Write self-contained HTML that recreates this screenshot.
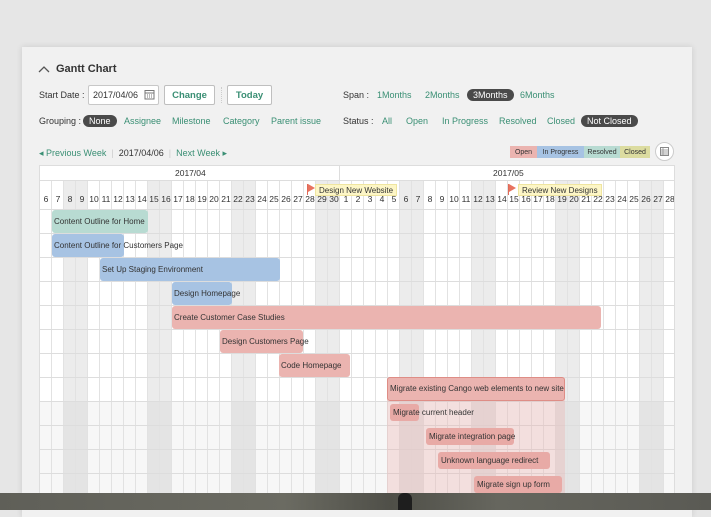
<!DOCTYPE html>
<html><head><meta charset="utf-8">
<style>
*{box-sizing:border-box;margin:0;padding:0}
body{width:711px;height:510px;overflow:hidden;background:#e6e6e6;font-family:"Liberation Sans",sans-serif;color:#333;position:relative}
.panel{position:absolute;left:22px;top:47px;width:670px;height:470px;background:#f1f1f1;box-shadow:0 0 6px rgba(0,0,0,.12)}
.a{position:absolute;white-space:nowrap}
.g{color:#3a8f74}
.t{font-size:9px}
.pill{background:#4a4a4a;color:#fff;border-radius:8px;padding:1px 6px}
.btn{border:1px solid #bfbfbf;background:#fff;color:#3a8f74;font-weight:bold;font-size:9.5px;height:20px;border-radius:2px;display:flex;align-items:center;justify-content:center}
.chart{position:absolute;left:39px;top:165px;width:636px;height:340px;background:#fff;border:1px solid #ddd;overflow:hidden}
.vl{position:absolute;top:15px;bottom:0;left:0;right:0;background:repeating-linear-gradient(90deg,transparent 0 11px,#e2e2e2 11px 12px)}
.we{position:absolute;top:15px;bottom:0;width:24px;background:#ececec}
.hl{position:absolute;left:0;right:0;height:1px;background:#ddd}
.days{position:absolute;left:0;top:28px;display:flex;font-size:8.5px;color:#333}
.days span{width:12px;text-align:center}
.bar{position:absolute;height:23px;border-radius:3px;font-size:8px;line-height:23px;padding-left:2px;white-space:nowrap;color:#333}
.o{background:#ebb4b0}.p{background:#a7c3e3}.r{background:#b8dbd2}
.c{position:absolute;height:17px;border-radius:3px;font-size:8px;line-height:17px;padding-left:3px;white-space:nowrap;background:#e8aaa6;color:#333}
.ms{position:absolute;top:18px;height:12px;font-size:8px;line-height:12px;background:#fdf6c6;border:1px solid #efe5a0;padding:0 3px;color:#333}
.flag{position:absolute;top:18px;width:8px;height:11px;border-left:1.5px solid #e06a58}
.flag:after{content:"";position:absolute;left:0;top:0;border-left:7px solid #e8735f;border-top:4px solid transparent;border-bottom:4px solid transparent}
.lg span{display:flex;align-items:center;justify-content:center;height:12px}
</style></head><body>
<div class="panel"></div>
<svg class="a" style="left:38px;top:65px" width="12" height="8"><path d="M1 7 L6 2 L11 7" fill="none" stroke="#555" stroke-width="1.3"/></svg>
<div class="a" style="left:56px;top:63px;font-size:11px;font-weight:bold;color:#333">Gantt Chart</div>
<div class="a t" style="left:39px;top:90px">Start Date :</div>
<div class="a" style="left:88px;top:85px;width:71px;height:20px;background:#fff;border:1px solid #c8c8c8;border-radius:2px;font-size:9px;line-height:18px;padding-left:4px">2017/04/06</div>
<svg class="a" style="left:144px;top:89px" width="11" height="11"><rect x="1" y="1.5" width="9" height="8.5" fill="none" stroke="#777"/><path d="M1 4h9M3 6h1M5 6h1M7 6h1M3 8h1M5 8h1M7 8h1" stroke="#777"/></svg>
<div class="a btn" style="left:164px;top:85px;width:51px">Change</div>
<div class="a" style="left:221px;top:87px;height:16px;border-left:1px dotted #ccc"></div>
<div class="a btn" style="left:227px;top:85px;width:45px">Today</div>
<div class="a t" style="left:39px;top:116px">Grouping :</div>
<div class="a t pill" style="left:83px;top:115px">None</div>
<div class="a t g" style="left:124px;top:116px">Assignee</div>
<div class="a t g" style="left:172px;top:116px">Milestone</div>
<div class="a t g" style="left:223px;top:116px">Category</div>
<div class="a t g" style="left:271px;top:116px">Parent issue</div>
<div class="a t" style="left:343px;top:90px">Span :</div>
<div class="a t g" style="left:377px;top:90px">1Months</div>
<div class="a t g" style="left:425px;top:90px">2Months</div>
<div class="a t pill" style="left:467px;top:89px">3Months</div>
<div class="a t g" style="left:520px;top:90px">6Months</div>
<div class="a t" style="left:343px;top:116px">Status :</div>
<div class="a t g" style="left:382px;top:116px">All</div>
<div class="a t g" style="left:406px;top:116px">Open</div>
<div class="a t g" style="left:442px;top:116px">In Progress</div>
<div class="a t g" style="left:499px;top:116px">Resolved</div>
<div class="a t g" style="left:547px;top:116px">Closed</div>
<div class="a t pill" style="left:581px;top:115px">Not Closed</div>
<div class="a t" style="left:39px;top:148px"><span class="g">◂ Previous Week</span> <span style="color:#ccc">&nbsp;|&nbsp;</span> 2017/04/06 <span style="color:#ccc">&nbsp;|&nbsp;</span> <span class="g">Next Week ▸</span></div>
<div class="a lg" style="left:510px;top:146px;height:12px;font-size:7px;display:flex">
<span style="background:#ebb4b0;width:27px">Open</span><span style="background:#a7c3e3;width:47px">In Progress</span><span style="background:#b8dbd2;width:36px">Resolved</span><span style="background:#dcdca0;width:30px">Closed</span></div>
<div class="a" style="left:655px;top:142px;width:19px;height:19px;border-radius:50%;background:#fff;border:1px solid #ccc"></div>
<svg class="a" style="left:660px;top:147px" width="9" height="9"><rect x=".5" y=".5" width="8" height="8" fill="none" stroke="#888"/><path d="M.5 3h8M.5 5h8M.5 7h8M3 .5v8" stroke="#888" stroke-width=".7"/></svg>

<div class="chart">
<div class="we" style="left:24px"></div><div class="we" style="left:108px"></div><div class="we" style="left:192px"></div><div class="we" style="left:276px"></div><div class="we" style="left:360px"></div><div class="we" style="left:432px"></div><div class="we" style="left:516px"></div><div class="we" style="left:600px"></div>
<div style="position:absolute;left:0;right:0;top:235px;bottom:0;background:rgba(0,0,0,.03)"></div>
<div class="vl"></div>
<div style="position:absolute;left:0;top:0;width:636px;height:15px;background:#fff;border-bottom:1px solid #ddd"></div>
<div style="position:absolute;left:299px;top:0;height:15px;border-left:1px solid #ddd"></div>
<div class="a" style="left:135px;top:2px;font-size:8.5px">2017/04</div>
<div class="a" style="left:453px;top:2px;font-size:8.5px">2017/05</div>
<div class="days"><span>6</span><span>7</span><span>8</span><span>9</span><span>10</span><span>11</span><span>12</span><span>13</span><span>14</span><span>15</span><span>16</span><span>17</span><span>18</span><span>19</span><span>20</span><span>21</span><span>22</span><span>23</span><span>24</span><span>25</span><span>26</span><span>27</span><span>28</span><span>29</span><span>30</span><span>1</span><span>2</span><span>3</span><span>4</span><span>5</span><span>6</span><span>7</span><span>8</span><span>9</span><span>10</span><span>11</span><span>12</span><span>13</span><span>14</span><span>15</span><span>16</span><span>17</span><span>18</span><span>19</span><span>20</span><span>21</span><span>22</span><span>23</span><span>24</span><span>25</span><span>26</span><span>27</span><span>28</span></div>
<div class="hl" style="top:43px"></div><div class="hl" style="top:67px"></div><div class="hl" style="top:91px"></div><div class="hl" style="top:115px"></div><div class="hl" style="top:139px"></div><div class="hl" style="top:163px"></div><div class="hl" style="top:187px"></div><div class="hl" style="top:211px"></div><div class="hl" style="top:235px"></div><div class="hl" style="top:259px"></div><div class="hl" style="top:283px"></div><div class="hl" style="top:307px"></div>
<div class="flag" style="left:267px"></div><div class="ms" style="left:275px">Design New Website</div>
<div class="flag" style="left:468px"></div><div class="ms" style="left:478px">Review New Designs</div>
<div class="bar r" style="left:12px;top:44px;width:96px">Content Outline for Home</div>
<div class="bar p" style="left:12px;top:68px;width:72px">Content Outline for Customers Page</div>
<div class="bar p" style="left:60px;top:92px;width:180px">Set Up Staging Environment</div>
<div class="bar p" style="left:132px;top:116px;width:60px">Design Homepage</div>
<div class="bar o" style="left:132px;top:140px;width:429px">Create Customer Case Studies</div>
<div class="bar o" style="left:180px;top:164px;width:83px">Design Customers Page</div>
<div class="bar o" style="left:239px;top:188px;width:71px">Code Homepage</div>
<div style="position:absolute;left:347px;top:212px;width:178px;height:130px;background:rgba(235,170,165,.3)"></div>
<div class="bar" style="left:347px;top:211px;width:178px;height:24px;background:#ebb4b0;border:1px solid #de8d86;line-height:22px">Migrate existing Cango web elements to new site</div>
<div class="c" style="left:350px;top:238px;width:29px">Migrate current header</div>
<div class="c" style="left:386px;top:262px;width:88px">Migrate integration page</div>
<div class="c" style="left:398px;top:286px;width:112px">Unknown language redirect</div>
<div class="c" style="left:434px;top:310px;width:88px">Migrate sign up form</div>
</div>
<div class="a" style="left:0;top:493px;width:711px;height:17px;background:linear-gradient(90deg,#5f5f58,#6b6b62 40%,#4f4f48 55%,#66665e 70%,#5a5a54)"></div>
<div class="a" style="left:398px;top:493px;width:14px;height:17px;background:#1e1e1e;border-radius:6px 6px 0 0"></div>
</body></html>
